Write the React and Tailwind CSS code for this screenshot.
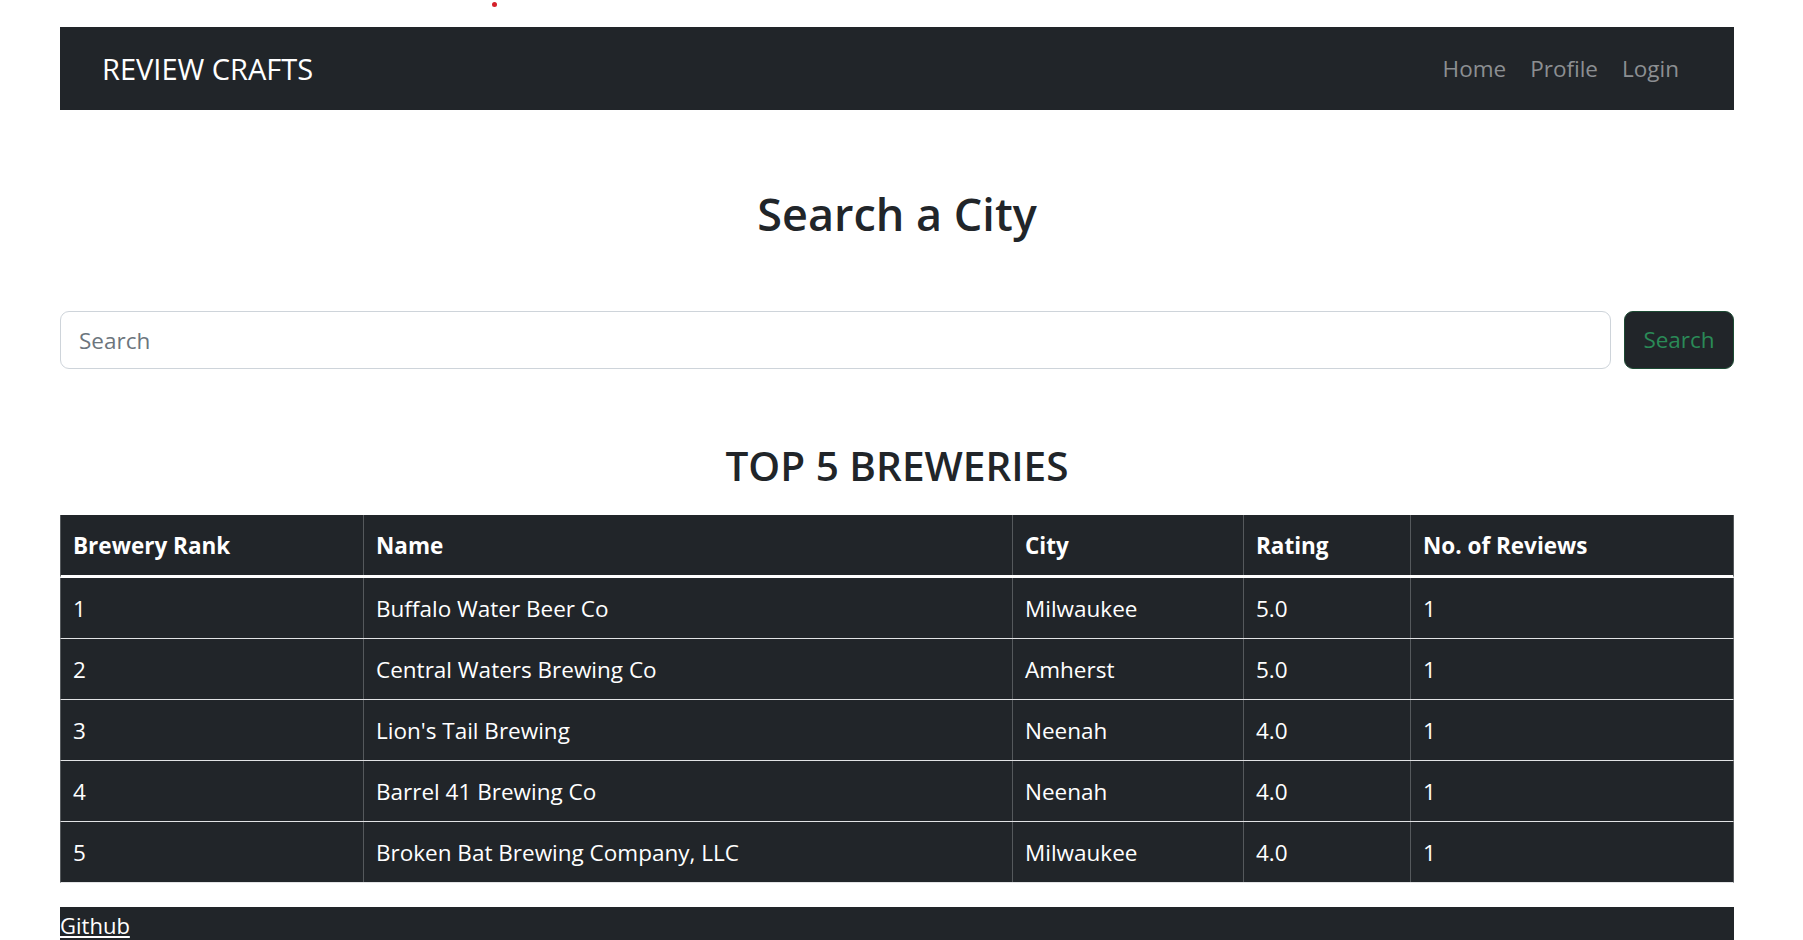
import React from 'react';

const breweries = [
  { rank: 1, name: 'Buffalo Water Beer Co', city: 'Milwaukee', rating: '5.0', reviews: 1 },
  { rank: 2, name: 'Central Waters Brewing Co', city: 'Amherst', rating: '5.0', reviews: 1 },
  { rank: 3, name: "Lion's Tail Brewing", city: 'Neenah', rating: '4.0', reviews: 1 },
  { rank: 4, name: 'Barrel 41 Brewing Co', city: 'Neenah', rating: '4.0', reviews: 1 },
  { rank: 5, name: 'Broken Bat Brewing Company, LLC', city: 'Milwaukee', rating: '4.0', reviews: 1 },
];

const cols = 'grid grid-cols-[302px_649px_231px_167px_323px] border-x border-[#55595c]';
const cell = 'px-[12px] pt-[13px] pb-[11px] leading-[36px] border-l border-[#55595c]';

const Navbar = () => (
  <nav className="h-[83px] bg-[#212529] flex items-center justify-between pl-[42px] pr-[43px]">
    <a className="text-[29px] text-white leading-none">REVIEW CRAFTS</a>
    <ul className="flex items-center">
      {['Home', 'Profile', 'Login'].map((l) => (
        <li key={l}>
          <a className="px-[12px] text-[22.5px] text-[#8c8f92]">{l}</a>
        </li>
      ))}
    </ul>
  </nav>
);

const SearchBar = () => (
  <form className="flex gap-[13px] mt-[69px]">
    <input
      type="text"
      placeholder="Search"
      className="flex-1 h-[58px] border border-[#ced4da] rounded-[9px] px-[18px] text-[22.5px] placeholder:text-[#6c757d] outline-none"
    />
    <button
      type="button"
      className="w-[110px] h-[58px] bg-[#212529] border border-[#1c4a33] rounded-[9px] text-[22.5px] text-[#2a8a57]"
    >
      Search
    </button>
  </form>
);

const BreweryTable = () => (
  <div className="mt-[24px] bg-[#212529] text-white text-[22.5px]">
    <div className={`${cols} border-b-[3px] border-b-white font-bold`}>
      <div className="px-[12px] pt-[13px] pb-[11px] leading-[36px]">Brewery Rank</div>
      <div className={cell}>Name</div>
      <div className={cell}>City</div>
      <div className={cell}>Rating</div>
      <div className={cell}>No. of Reviews</div>
    </div>
    {breweries.map((b) => (
      <div key={b.rank} className={`${cols} border-b border-b-[#e2e3e5]`}>
        <div className="px-[12px] pt-[13px] pb-[11px] leading-[36px]">{b.rank}</div>
        <div className={cell}>{b.name}</div>
        <div className={cell}>{b.city}</div>
        <div className={cell}>{b.rating}</div>
        <div className={cell}>{b.reviews}</div>
      </div>
    ))}
  </div>
);

export default function App() {
  return (
    <div className="relative min-h-screen bg-white text-[#212529] font-['Open_Sans','Noto_Sans',sans-serif]">
      <span className="absolute left-[492px] top-[2px] w-[5px] h-[5px] rounded-full bg-[#d4202a]" />
      <div className="w-[1674px] ml-[60px] pt-[27px]">
        <Navbar />
        <h2 className="mt-[75px] h-[57px] text-center text-[45px] leading-[57px] font-semibold">Search a City</h2>
        <SearchBar />
        <h3 className="mt-[72px] h-[50px] text-center text-[40.5px] leading-[50px] font-semibold">TOP 5 BREWERIES</h3>
        <BreweryTable />
        <footer className="mt-[24px] min-h-[60px] bg-[#212529]">
          <a className="text-[22px] leading-[36px] text-white underline">Github</a>
        </footer>
      </div>
    </div>
  );
}
